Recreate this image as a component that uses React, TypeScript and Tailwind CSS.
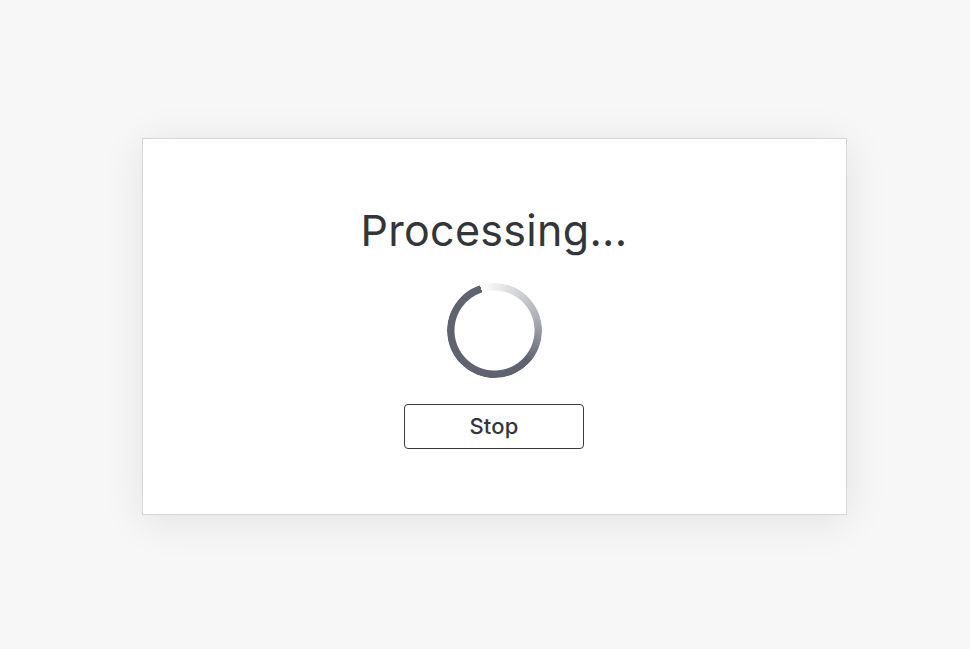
export default function App() {
  return (
    <div className="flex h-[649px] w-full items-center justify-center bg-[#f7f7f7] pl-[18px] pt-[4px] font-['Inter',sans-serif]">
      <div className="flex h-[377px] w-[705px] flex-col items-center border border-[#d6d6d6] bg-white pt-[62px] shadow-[0_6px_40px_rgba(0,0,0,0.09)]">
        <h1 className="text-[43px] leading-[58px] font-normal tracking-[0.3px] text-[#32363a]">Processing...</h1>
        <div
          className="mt-[24px] h-[95px] w-[95px] rounded-full bg-[conic-gradient(from_342deg,rgba(95,99,112,0)_0deg,rgba(95,99,112,0.5)_90deg,#5f6370_150deg,#5f6370_360deg)] [mask:radial-gradient(farthest-side,transparent_calc(100%-8px),#000_calc(100%-7px))]"
        />
        <button className="mt-[26px] h-[45px] w-[180px] rounded-[4px] border border-[#3a3a3a] bg-white text-[22px] font-medium tracking-[0.2px] text-[#32363a]">
          Stop
        </button>
      </div>
    </div>
  );
}
